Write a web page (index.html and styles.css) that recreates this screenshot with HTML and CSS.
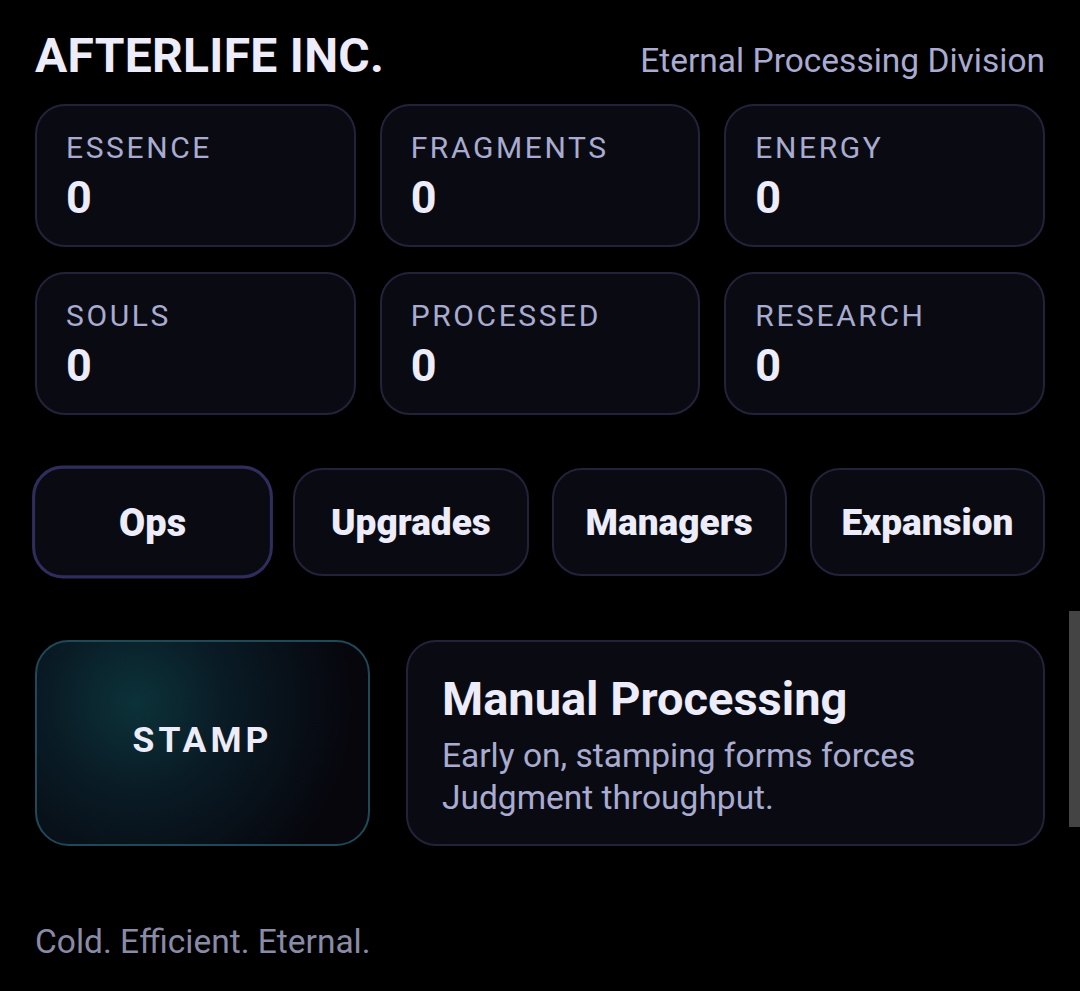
FILE: index.html
```html
<!DOCTYPE html>
<html lang="en">
<head>
  <meta charset="UTF-8" />
  <meta name="viewport" content="width=device-width, initial-scale=1.0"/>
  <title>Afterlife Inc.</title>
  <link rel="stylesheet" href="styles.css">
</head>
<body>
  <div class="app">
    <header class="top">
      <h1 class="brand">AFTERLIFE INC.</h1>
      <div class="division">Eternal Processing Division</div>
    </header>

    <section class="stats">
      <div class="stat"><div class="stat-label">ESSENCE</div><div class="stat-value">0</div></div>
      <div class="stat"><div class="stat-label">FRAGMENTS</div><div class="stat-value">0</div></div>
      <div class="stat"><div class="stat-label">ENERGY</div><div class="stat-value">0</div></div>
      <div class="stat"><div class="stat-label">SOULS</div><div class="stat-value">0</div></div>
      <div class="stat"><div class="stat-label">PROCESSED</div><div class="stat-value">0</div></div>
      <div class="stat"><div class="stat-label">RESEARCH</div><div class="stat-value">0</div></div>
    </section>

    <nav class="tabs">
      <button class="tab active">Ops</button>
      <button class="tab">Upgrades</button>
      <button class="tab">Managers</button>
      <button class="tab">Expansion</button>
    </nav>

    <section class="ops">
      <button class="stamp">STAMP</button>
      <div class="info">
        <h2>Manual Processing</h2>
        <p>Early on, stamping forms forces Judgment throughput.</p>
      </div>
    </section>

    <footer class="motto">Cold. Efficient. Eternal.</footer>
  </div>

  <!-- overlay scrollbar thumb -->
  <div class="scroll-thumb"></div>
</body>
</html>
```

FILE: styles.css
```css
body, html {
  margin: 0;
  padding: 0;
  height: 100%;
  background: #000;
  font-family: Roboto, "Noto Sans", sans-serif;
  color: #ececfb;
  overflow: hidden;
}

.app {
  padding: 29px 35px 0 35px;
}

.top {
  display: flex;
  justify-content: space-between;
  align-items: baseline;
}

.brand {
  margin: 0;
  font-size: 48px;
  line-height: 54px;
  font-weight: 700;
  color: #ececfb;
  letter-spacing: 0.3px;
}

.division {
  font-size: 33.5px;
  color: #a9abd1;
}

.stats {
  margin-top: 21px;
  display: grid;
  grid-template-columns: repeat(3, 1fr);
  column-gap: 24px;
  row-gap: 25px;
}

.stat {
  height: 143px;
  box-sizing: border-box;
  background: #0a0b12;
  border: 2px solid #22233a;
  border-radius: 30px;
  padding: 25px 29px;
}

.stat-label {
  font-size: 30px;
  line-height: 34px;
  letter-spacing: 2.6px;
  color: #a9abd1;
}

.stat-value {
  margin-top: 8px;
  font-size: 45px;
  line-height: 50px;
  font-weight: 700;
  color: #ececfb;
}

.tabs {
  margin-top: 53px;
  display: grid;
  grid-template-columns: repeat(4, 1fr);
  gap: 23px;
}

.tab {
  height: 108px;
  background: #0a0b12;
  border: 2px solid #22233a;
  border-radius: 30px;
  font-family: Roboto, sans-serif;
  font-size: 37px;
  font-weight: 900;
  color: #ececfb;
  cursor: pointer;
}

.tab.active {
  border: 3px solid #2e2d5c;
  transform: scale(1.025, 1.045);
}

.ops {
  margin-top: 64px;
  display: grid;
  grid-template-columns: 335px 1fr;
  gap: 36px;
}

.stamp {
  height: 206px;
  padding-bottom: 8px;
  border: 2px solid #1e4a58;
  border-radius: 34px;
  background: radial-gradient(circle at 30% 30%, #0c3239 0%, #091a24 35%, #07060d 80%);
  font-family: Roboto, sans-serif;
  font-size: 35.5px;
  font-weight: 700;
  letter-spacing: 4px;
  color: #ececfb;
  cursor: pointer;
}

.info {
  height: 206px;
  box-sizing: border-box;
  background: #0a0b12;
  border: 2px solid #22233a;
  border-radius: 30px;
  padding: 30px 34px;
}

.info h2 {
  margin: 0;
  font-size: 47px;
  line-height: 54px;
  font-weight: 700;
  color: #ececfb;
}

.info p {
  margin: 9px 0 0 0;
  font-size: 33.5px;
  line-height: 42px;
  color: #a9abd1;
}

.motto {
  margin-top: 76px;
  font-size: 33.5px;
  color: #8a8ba6;
}

.scroll-thumb {
  position: fixed;
  right: 0;
  top: 611px;
  width: 11px;
  height: 216px;
  background: #444;
}
```
